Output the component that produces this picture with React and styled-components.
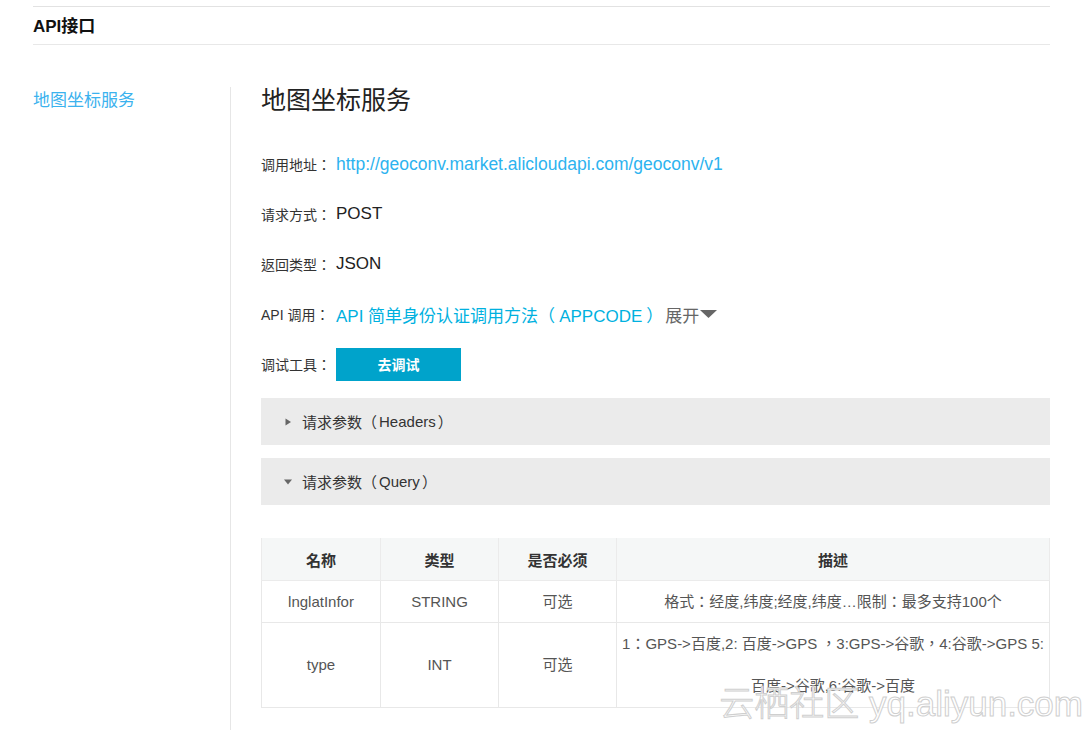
import React from "react";
import styled, { createGlobalStyle } from "styled-components";

const Global = createGlobalStyle`
  html, body { margin: 0; padding: 0; background: #fff; }
  body {
    font-family: "Liberation Sans", Arial, "Noto Sans CJK TC", sans-serif;
    color: #333;
    overflow: hidden;
  }
`;

const Page = styled.div`
  position: relative;
  width: 1017px;
  margin-left: 33px;
  padding-top: 6px;
  height: 724px;
`;

const Header = styled.div`
  border-top: 1px solid #e2e2e2;
  border-bottom: 1px solid #e8e8e8;
  height: 37px;
  display: flex;
  align-items: center;
  font-size: 17px;
  font-weight: bold;
  color: #111;
  & > span { margin-top: -3px; }
`;

const Body = styled.div`
  display: flex;
  margin-top: 42px;
`;

const Nav = styled.div`
  width: 197px;
  border-right: 1px solid #e6e6e6;
  min-height: 650px;
  flex-shrink: 0;
`;

const NavItem = styled.div`
  font-size: 17px;
  color: #3bb2ee;
  line-height: 26px;
  margin-top: 1px;
`;

const Main = styled.div`
  flex: 1;
  padding-left: 30px;
`;

const Title = styled.h2`
  margin: 0;
  font-size: 25px;
  font-weight: normal;
  color: #222;
  line-height: 26px;
  margin-bottom: 26px;
`;

const InfoRow = styled.div`
  display: flex;
  align-items: center;
  height: 50px;
`;

const Label = styled.span`
  width: 75px;
  font-size: 14px;
  color: #333;
  flex-shrink: 0;
`;

const Value = styled.span`
  font-size: ${(p) => p.$size || 17}px;
  color: ${(p) => p.$color || "#222"};
`;

const Inner = styled.span`
  padding: 0 ${(p) => p.$pad || 4}px;
`;

const Toggle = styled.span`
  font-size: 17px;
  color: #666;
  display: inline-flex;
  align-items: center;
  margin-left: 2px;
`;

const Caret = styled.svg`
  margin-left: 1px;
`;

const DebugButton = styled.button`
  width: 125px;
  height: 33px;
  border: none;
  background: #00a3cb;
  color: #fff;
  font-family: inherit;
  font-size: 14px;
  font-weight: bold;
  padding: 0;
  cursor: pointer;
`;

const Panel = styled.div`
  height: 47px;
  background: #ebebeb;
  display: flex;
  align-items: center;
  padding-left: 23px;
  font-size: 15px;
  color: #333;
  margin-top: ${(p) => p.$mt}px;
`;

const PanelIcon = styled.svg`
  width: 8px;
  height: 8px;
  margin-right: 10px;
`;

const Table = styled.table`
  margin-top: 33px;
  width: 789px;
  border-collapse: collapse;
  table-layout: fixed;
  font-size: 15px;
`;

const Th = styled.th`
  background: #f5f7f7;
  height: 42px;
  font-weight: bold;
  color: #333;
  border: 1px solid #ebebeb;
  border-top: none;
  padding: 0;
`;

const Td = styled.td`
  color: #555;
  text-align: center;
  border: 1px solid #e8e8e8;
  height: ${(p) => p.$h || 41}px;
  padding: 0 4px;
  line-height: ${(p) => p.$lh || 20}px;
`;

const Watermark = styled.div`
  position: absolute;
  right: -33px;
  bottom: 4px;
  font-size: 35px;
  font-weight: 300;
  font-family: "Liberation Sans", "Noto Sans CJK SC", sans-serif;
  color: #fff;
  -webkit-text-stroke: 1px #cfcfcf;
  white-space: nowrap;
  pointer-events: none;
`;

const Right = () => (
  <PanelIcon viewBox="0 0 8 8"><path d="M1.5 0.5 L7 4 L1.5 7.5 Z" fill="#666" /></PanelIcon>
);
const Down = () => (
  <PanelIcon viewBox="0 0 8 8"><path d="M0 1.5 L8 1.5 L4 6.5 Z" fill="#666" /></PanelIcon>
);

export default function App() {
  return (
    <>
      <Global />
      <Page>
        <Header><span>API接口</span></Header>
        <Body>
          <Nav>
            <NavItem>地图坐标服务</NavItem>
          </Nav>
          <Main>
            <Title>地图坐标服务</Title>
            <InfoRow>
              <Label>调用地址：</Label>
              <Value $size={17.5} $color="#2db3ef">http://geoconv.market.alicloudapi.com/geoconv/v1</Value>
            </InfoRow>
            <InfoRow>
              <Label>请求方式：</Label>
              <Value>POST</Value>
            </InfoRow>
            <InfoRow>
              <Label>返回类型：</Label>
              <Value>JSON</Value>
            </InfoRow>
            <InfoRow>
              <Label>API 调用：</Label>
              <Value $color="#00b1df">API 简单身份认证调用方法（<Inner>APPCODE</Inner>）</Value>
              <Toggle>
                展开
                <Caret width="17" height="10" viewBox="0 0 17 10"><path d="M0 1 L17 1 L8.5 9 Z" fill="#666" /></Caret>
              </Toggle>
            </InfoRow>
            <InfoRow>
              <Label>调试工具：</Label>
              <DebugButton>去调试</DebugButton>
            </InfoRow>
            <Panel $mt={9}><Right />请求参数（<Inner $pad={2}>Headers</Inner>）</Panel>
            <Panel $mt={13}><Down />请求参数（<Inner $pad={2}>Query</Inner>）</Panel>
            <Table>
              <colgroup>
                <col style={{ width: 119 }} />
                <col style={{ width: 118 }} />
                <col style={{ width: 118 }} />
                <col />
              </colgroup>
              <thead>
                <tr>
                  <Th>名称</Th>
                  <Th>类型</Th>
                  <Th>是否必须</Th>
                  <Th>描述</Th>
                </tr>
              </thead>
              <tbody>
                <tr>
                  <Td>lnglatInfor</Td>
                  <Td>STRING</Td>
                  <Td>可选</Td>
                  <Td>格式：经度,纬度;经度,纬度…限制：最多支持100个</Td>
                </tr>
                <tr>
                  <Td $h={84}>type</Td>
                  <Td $h={84}>INT</Td>
                  <Td $h={84}>可选</Td>
                  <Td $h={84} $lh={42}>
                    1：GPS-&gt;百度,2: 百度-&gt;GPS ，3:GPS-&gt;谷歌，4:谷歌-&gt;GPS 5:<br />百度-&gt;谷歌,6:谷歌-&gt;百度
                  </Td>
                </tr>
              </tbody>
            </Table>
          </Main>
        </Body>
        <Watermark>云栖社区 yq.aliyun.com</Watermark>
      </Page>
    </>
  );
}
